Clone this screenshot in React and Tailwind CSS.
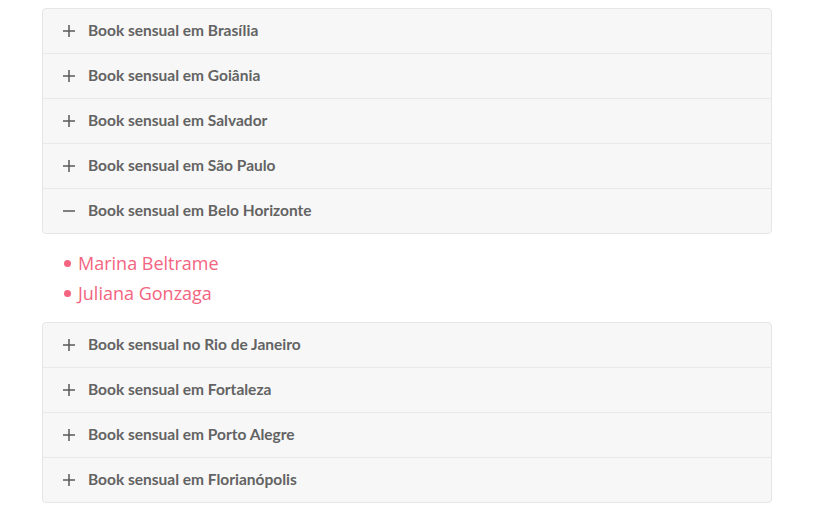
import React from "react";

const Plus = () => (
  <svg width="12" height="12" viewBox="0 0 12 12" className="shrink-0">
    <path d="M6 0v12M0 6h12" stroke="#5a5a5a" strokeWidth="1.5" />
  </svg>
);
const Minus = () => (
  <svg width="12" height="12" viewBox="0 0 12 12" className="shrink-0">
    <path d="M0 6h12" stroke="#5a5a5a" strokeWidth="1.5" />
  </svg>
);

const Row = ({ label, open, last }) => (
  <div
    className={`flex items-center pl-[20px] gap-[14px] ${last ? "h-[44px]" : "h-[45px] border-b border-[#e9e9e9]"}`}
  >
    {open ? <Minus /> : <Plus />}
    <span
      className="text-[15.5px] font-bold text-[#636363] -ml-[1px]"
      style={{ fontFamily: "Lato, 'Open Sans', sans-serif" }}
    >
      {label}
    </span>
  </div>
);

const Group = ({ items, openLast }) => (
  <div className="w-[730px] bg-[#f7f7f7] border border-[#e6e6e6] rounded-[4px]">
    {items.map((t, i) => (
      <Row key={t} label={t} open={openLast && i === items.length - 1} last={i === items.length - 1} />
    ))}
  </div>
);

const Item = ({ children }) => (
  <div className="flex items-center">
    <span className="w-[7px] h-[7px] rounded-full bg-[#f36480] mr-[7px] mt-[1px]" />
    {children}
  </div>
);

export default function App() {
  return (
    <div className="w-[821px] h-[511px] bg-white pt-[8px] pl-[42px]" style={{ fontFamily: "'Open Sans', sans-serif" }}>
      <Group
        openLast
        items={[
          "Book sensual em Brasília",
          "Book sensual em Goiânia",
          "Book sensual em Salvador",
          "Book sensual em São Paulo",
          "Book sensual em Belo Horizonte",
        ]}
      />
      <div className="pl-[22px] pt-[14px] pb-[14px] text-[18px] leading-[30px] text-[#f36480]">
        <Item>Marina Beltrame</Item>
        <Item>Juliana Gonzaga</Item>
      </div>
      <Group
        items={[
          "Book sensual no Rio de Janeiro",
          "Book sensual em Fortaleza",
          "Book sensual em Porto Alegre",
          "Book sensual em Florianópolis",
        ]}
      />
    </div>
  );
}
